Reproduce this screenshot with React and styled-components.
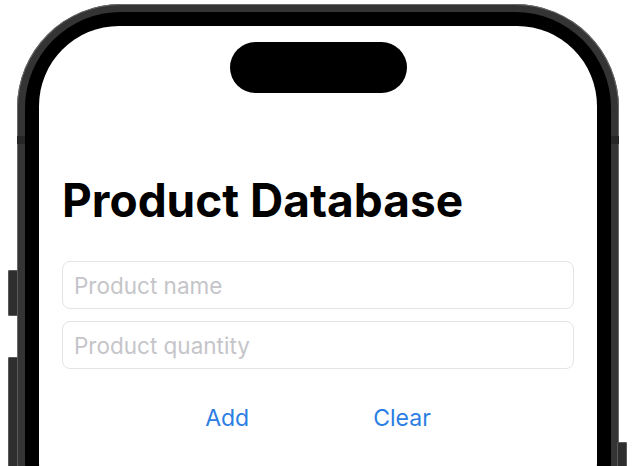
import React, { useState } from 'react';
import styled, { createGlobalStyle } from 'styled-components';

const GlobalStyle = createGlobalStyle`
  html, body {
    margin: 0;
    padding: 0;
    background: #ffffff;
    font-family: Inter, "Noto Sans", sans-serif;
  }
  #root {
    height: 466px;
    overflow: hidden;
  }
`;

const App = () => {
  const [name, setName] = useState('');
  const [quantity, setQuantity] = useState('');

  const clear = () => {
    setName('');
    setQuantity('');
  };

  return (
    <Page>
      <GlobalStyle />
      <Phone>
        <SideButton side='left' top={266} height={46} />
        <SideButton side='left' top={353} height={130} />
        <SideButton side='right' top={438} height={90} />
        <Antenna side='left' />
        <Antenna side='right' />
        <Bezel>
          <Screen>
            <Island />
            <Title>Product Database</Title>
            <Fields>
              <Field
                placeholder='Product name'
                value={name}
                onChange={e => setName(e.target.value)}
              />
              <Field
                placeholder='Product quantity'
                value={quantity}
                onChange={e => setQuantity(e.target.value)}
              />
            </Fields>
            <Actions>
              <LinkButton>Add</LinkButton>
              <LinkButton onClick={clear}>Clear</LinkButton>
            </Actions>
          </Screen>
        </Bezel>
      </Phone>
    </Page>
  );
};

const Page = styled.div`
  padding: 4px 0 0 17px;
`;

const Phone = styled.div`
  position: relative;
  width: 602px;
  height: 560px;
  box-sizing: border-box;
  padding: 8px;
  border-radius: 104px;
  background: #343434;
  box-shadow: inset 0 0 0 1px #6a6a6a;
`;

const SideButton = styled.div`
  position: absolute;
  top: ${p => p.top}px;
  height: ${p => p.height}px;
  width: 10px;
  ${p => (p.side === 'left' ? 'left: -9px;' : 'right: -8px;')}
  background: #2e2e2e;
  border-radius: 2px;
  box-shadow: inset 0 0 0 1px #5a5a5a;
`;

const Antenna = styled.div`
  position: absolute;
  top: 132px;
  width: 8px;
  height: 8px;
  background: #262626;
  ${p => (p.side === 'left' ? 'left: 0;' : 'right: 0;')}
`;

const Bezel = styled.div`
  height: 100%;
  box-sizing: border-box;
  padding: 14px;
  border-radius: 96px;
  background: #000;
`;

const Screen = styled.div`
  height: 100%;
  box-sizing: border-box;
  display: flex;
  flex-direction: column;
  padding: 16px 23px 0;
  border-radius: 80px;
  background: #fff;
`;

const Island = styled.div`
  align-self: center;
  width: 177px;
  height: 51px;
  border-radius: 26px;
  background: #000;
`;

const Title = styled.h1`
  margin: 84px 0 0;
  font-size: 46px;
  line-height: 46px;
  font-weight: 700;
  color: #000;
`;

const Fields = styled.div`
  display: flex;
  flex-direction: column;
  gap: 12px;
  margin-top: 38px;
`;

const Field = styled.input`
  height: 48px;
  box-sizing: border-box;
  padding: 0 11px;
  border: 1px solid #e4e4e7;
  border-radius: 8px;
  font-family: Inter, "Noto Sans", sans-serif;
  font-size: 22.5px;
  color: #000;
  outline: none;
  &::placeholder {
    color: #c5c5c9;
  }
`;

const Actions = styled.div`
  display: flex;
  justify-content: center;
  gap: 124px;
  margin-top: 38px;
`;

const LinkButton = styled.button`
  padding: 0;
  border: none;
  background: none;
  font-family: Inter, "Noto Sans", sans-serif;
  font-size: 23px;
  line-height: 23px;
  color: #2b7ee3;
  cursor: pointer;
`;

export default App;
